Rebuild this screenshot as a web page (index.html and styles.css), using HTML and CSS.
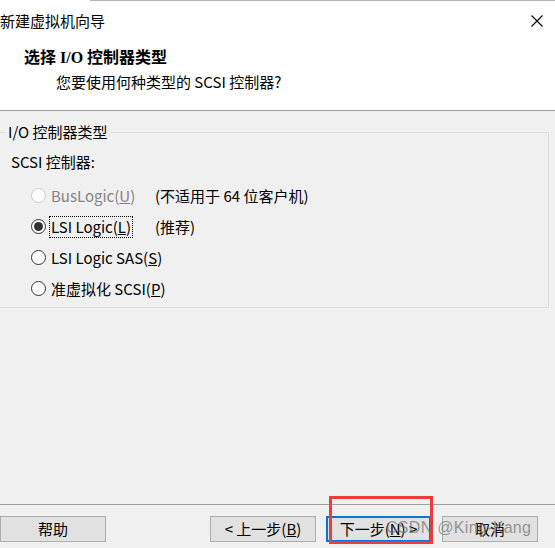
FILE: index.html
```html
<!DOCTYPE html>
<html lang="zh-CN">
<head>
<meta charset="utf-8">
<title>新建虚拟机向导</title>
<link rel="stylesheet" href="styles.css">
</head>
<body>
<div class="window">
  <header class="header">
    <div class="top-rule"></div>
    <div class="titlebar">
      <span class="title">新建虚拟机向导</span>
      <svg class="close" width="12" height="12" viewBox="0 0 12 12"><path d="M0.5 0.5 L11.5 11.5 M11.5 0.5 L0.5 11.5" stroke="#000" stroke-width="1.1" fill="none"/></svg>
    </div>
    <h1 class="heading">选择 I/O 控制器类型</h1>
    <p class="subtitle">您要使用何种类型的 SCSI 控制器?</p>
  </header>

  <fieldset class="group">
    <legend class="legend">I/O 控制器类型</legend>
    <div class="group-label">SCSI 控制器:</div>
    <div class="options">
      <div class="option disabled">
        <span class="radio"></span>
        <span class="opt-label"><span class="opt-text">BusLogic(<u>U</u>)</span></span>
        <span class="opt-note">(不适用于 64 位客户机)</span>
      </div>
      <div class="option">
        <span class="radio checked"></span>
        <span class="opt-label"><span class="opt-text focus">LSI Logic(<u>L</u>)</span></span>
        <span class="opt-note">(推荐)</span>
      </div>
      <div class="option">
        <span class="radio"></span>
        <span class="opt-label"><span class="opt-text">LSI Logic SAS(<u>S</u>)</span></span>
      </div>
      <div class="option">
        <span class="radio"></span>
        <span class="opt-label"><span class="opt-text">准虚拟化 SCSI(<u>P</u>)</span></span>
      </div>
    </div>
  </fieldset>

  <div class="spacer"></div>

  <footer class="footer">
    <button class="btn btn-help">帮助</button>
    <button class="btn btn-back">&lt; 上一步(<u>B</u>)</button>
    <button class="btn btn-next">下一步(<u>N</u>) &gt;</button>
    <button class="btn btn-cancel">取消</button>
    <div class="highlight"></div>
    <div class="watermark">CSDN @King-Kang</div>
  </footer>
</div>
</body>
</html>
```

FILE: styles.css
```css
* { box-sizing: border-box; }

html, body {
  margin: 0;
  padding: 0;
  width: 555px;
  height: 548px;
  overflow: hidden;
  background: #f0f0f0;
}

body {
  font-family: "Noto Sans CJK SC", sans-serif;
  font-size: 15px;
  color: #000;
}

.window {
  display: flex;
  flex-direction: column;
  width: 555px;
  height: 548px;
}

.header {
  background: #fff;
  height: 111px;
  border-bottom: 1px solid #a0a0a0;
  flex: none;
}

.top-rule {
  height: 1px;
  margin-left: 90px;
  background: #b4b4b4;
}

.titlebar {
  display: flex;
  align-items: center;
  justify-content: space-between;
  height: 40px;
  padding-right: 12px;
}

.title {
  font-size: 15px;
  line-height: 20px;
}

.close { display: block; }

.heading {
  margin: 7px 0 0 24px;
  font-family: "Liberation Serif", "Noto Sans CJK SC", serif;
  font-size: 16px;
  font-weight: bold;
  line-height: 20px;
}

.subtitle {
  margin: 4px 0 0 56px;
  font-size: 15px;
  line-height: 20px;
}

.group {
  flex: none;
  margin: 11px 0 0 -3px;
  width: 552px;
  padding: 10px 0 3px 0;
  border: 1px solid #dcdcdc;
}

.legend {
  margin-left: 7px;
  padding: 0 3px;
  line-height: 20px;
  font-size: 15px;
}

.group-label {
  padding-left: 13px;
  line-height: 20px;
}

.options {
  margin-top: 8px;
  display: flex;
  flex-direction: column;
}

.option {
  display: flex;
  align-items: center;
  height: 31px;
  padding-left: 33px;
  line-height: 20px;
  white-space: nowrap;
}

.radio {
  flex: none;
  width: 15px;
  height: 15px;
  border: 1px solid #333;
  border-radius: 50%;
  background: #fff;
  display: flex;
  align-items: center;
  justify-content: center;
}

.radio.checked::after {
  content: "";
  width: 9px;
  height: 9px;
  border-radius: 50%;
  background: #333;
}

.option.disabled .radio {
  border-color: #cccccc;
  background: #fcfcfc;
}

.option.disabled .opt-text {
  color: #838383;
}

.opt-label {
  flex: none;
  width: 109px;
  padding-left: 5px;
}

.opt-text.focus {
  display: inline-block;
  margin-left: -1px;
  padding: 0 1px;
  outline: 1px dotted #000;
  outline-offset: 0;
}

.spacer { flex: 1; }

.footer {
  position: relative;
  flex: none;
  display: flex;
  align-items: center;
  border-top: 1px solid #a0a0a0;
  padding: 11px 17px 6px 0;
}

.btn {
  height: 26px;
  padding: 0;
  border: 1px solid #adadad;
  background: #e1e1e1;
  font-family: "Noto Sans CJK SC", sans-serif;
  font-size: 15px;
  line-height: 22px;
  color: #000;
}

.btn-help { width: 106px; }
.btn-back { width: 106px; margin-left: auto; }
.btn-next { width: 105px; margin-left: 10px; border: 2px solid #0078d7; }
.btn-cancel { width: 96px; margin-left: 11px; }

.highlight {
  position: absolute;
  left: 329px;
  top: -9px;
  width: 104px;
  height: 48px;
  border: 3px solid #ef3b3b;
}

.watermark {
  position: absolute;
  left: 386px;
  top: 13px;
  font-family: "Liberation Sans", sans-serif;
  font-size: 16px;
  line-height: 20px;
  letter-spacing: 0.3px;
  color: rgba(110, 110, 110, 0.7);
  white-space: nowrap;
  pointer-events: none;
}
```
